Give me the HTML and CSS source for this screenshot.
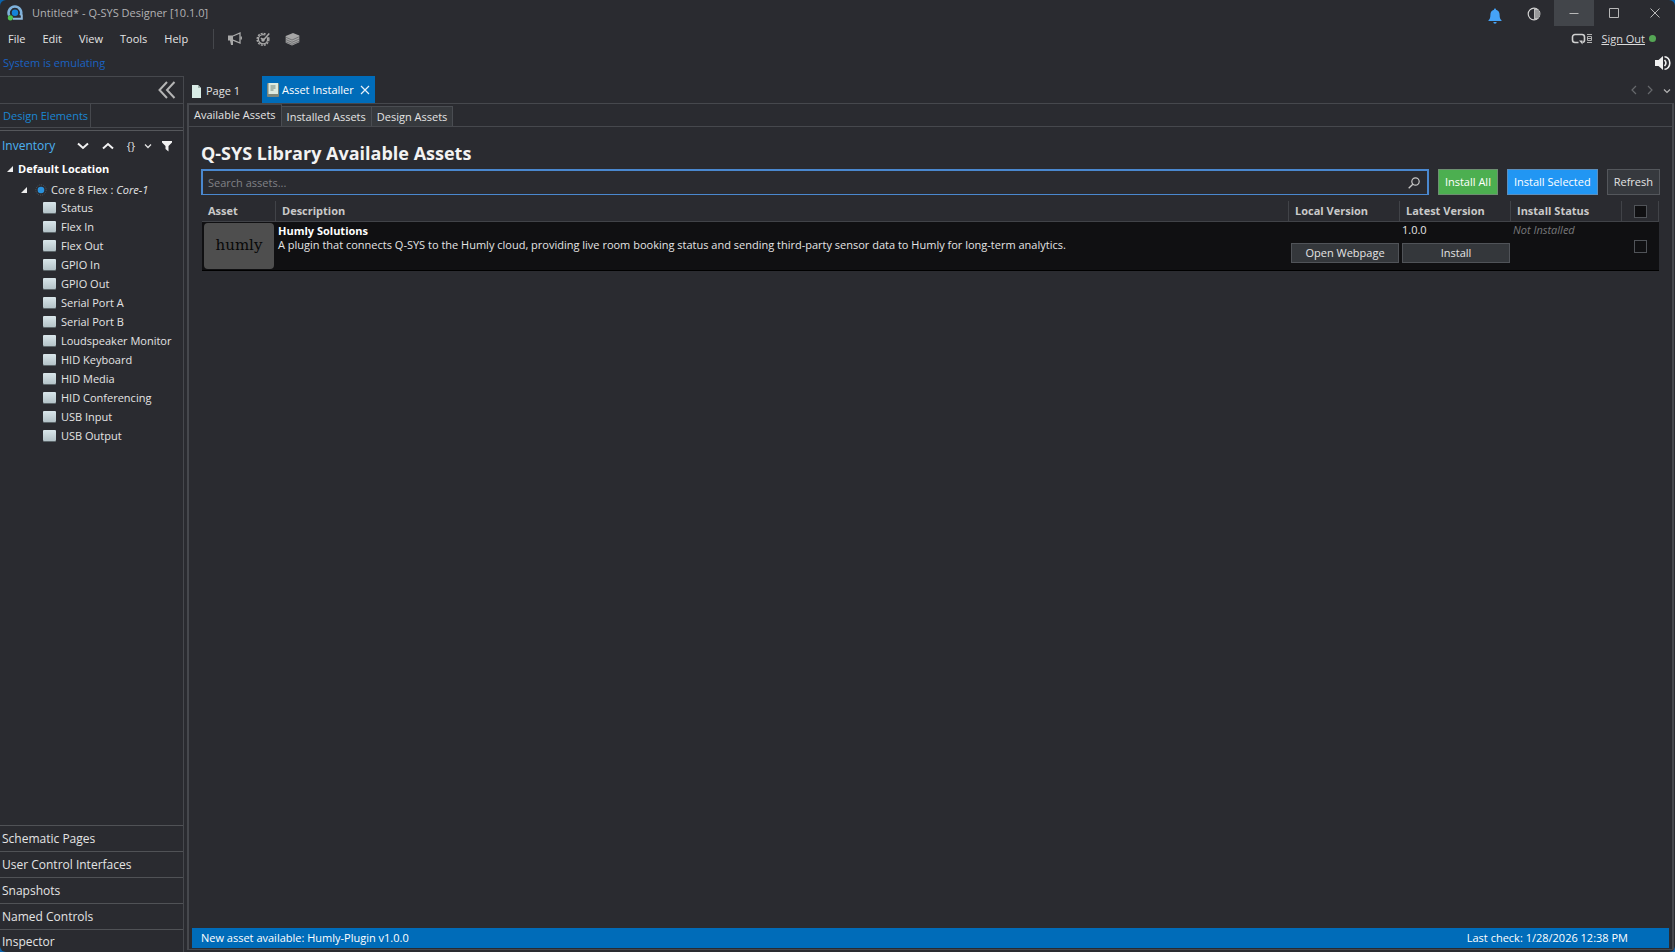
FILE: index.html
```html
<!DOCTYPE html>
<html lang="en">
<head>
<meta charset="utf-8">
<title>Untitled* - Q-SYS Designer [10.1.0]</title>
<link rel="stylesheet" href="styles.css">
</head>
<body>
<div class="app">
  <header class="titlebar">
    <svg class="logo" viewBox="0 0 16 16" width="16" height="16" aria-hidden="true">
      <path d="M2.200 10.500A6.300 6.300 0 1 1 13.600 10.500" fill="none" stroke="#7fb2dc" stroke-width="2.600"/>
      <path d="M6 13.800h8.800V9.500" fill="none" stroke="#8fb9dc" stroke-width="2"/>
      <circle cx="8" cy="7.800" r="3.200" fill="#1583d8"/>
      <circle cx="3.400" cy="12.800" r="2.600" fill="#52c450"/>
    </svg>
    <h1 class="window-title">Untitled* - Q-SYS Designer [10.1.0]</h1>
    <button class="icon-btn bell" aria-label="Notifications">
      <svg viewBox="0 0 14 16" width="14" height="16"><path d="M7 0.500a1 1 0 0 1 1 1.200c2.400.6 3.600 2.500 3.600 5 0 3.500.8 4.500 1.900 5.500v.9H.5v-.9c1.100-1 1.900-2 1.900-5.500 0-2.500 1.200-4.400 3.600-5A1 1 0 0 1 7 .5zM5.300 14h3.400a1.700 1.700 0 0 1-3.400 0z" fill="#45a3f7"/></svg>
    </button>
    <button class="icon-btn theme" aria-label="Theme">
      <svg viewBox="0 0 14 14" width="14" height="14"><circle cx="7" cy="7" r="5.800" fill="none" stroke="#d2d2d2" stroke-width="1.200"/><path d="M7 1a6 6 0 0 1 0 12z" fill="#bdbdbd"/><path d="M8 4h4M8 6h5M8 8h5M8 10h4" stroke="#55565a" stroke-width=".7"/></svg>
    </button>
    <button class="win-btn lit" aria-label="Minimize"><svg viewBox="0 0 12 12" width="12" height="12"><path d="M1.500 6.500h9" stroke="#b8b8b8"/></svg></button>
    <button class="win-btn" aria-label="Maximize"><svg viewBox="0 0 12 12" width="12" height="12"><path d="M1.500 1.500h9v9h-9z" fill="none" stroke="#b8b8b8"/></svg></button>
    <button class="win-btn" aria-label="Close"><svg viewBox="0 0 12 12" width="12" height="12"><path d="M1.500 1.500l9 9m0-9l-9 9" stroke="#b8b8b8"/></svg></button>
  </header>

  <div class="menubar">
    <nav class="menus">
      <button>File</button><button>Edit</button><button>View</button><button>Tools</button><button>Help</button>
    </nav>
    <div class="tools">
      <button class="icon-btn" aria-label="Announcements">
        <svg viewBox="0 0 15 14" width="15" height="14"><path d="M1 3.500h5v5H1zM3 8.500h3v4.500H4z" fill="#a9a9a9"/><path d="M6 4L13 1v10L6 8.200" fill="none" stroke="#a9a9a9" stroke-width="1.300"/><path d="M14.200 4.500v3" stroke="#a9a9a9" stroke-width="1.500"/></svg>
      </button>
      <button class="icon-btn" aria-label="Design check">
        <svg viewBox="0 0 15 14" width="15" height="14"><circle cx="7" cy="7.300" r="5.900" fill="none" stroke="#a9a9a9" stroke-width="1.400" stroke-dasharray="2 1.090"/><circle cx="7" cy="7.300" r="4.600" fill="none" stroke="#a9a9a9" stroke-width="1.300"/><path d="M7 7.500L12.500 2" stroke="#2a2b30" stroke-width="3"/><path d="M4.800 6l2.200 1.500M7 8.500L13.300 1.500" fill="none" stroke="#a9a9a9" stroke-width="1.500"/><circle cx="7" cy="8" r="1.700" fill="#a9a9a9"/></svg>
      </button>
      <button class="icon-btn" aria-label="Assets">
        <svg viewBox="0 0 15 14" width="15" height="14"><path d="M.7 4L8 1l6.300 2.400v6.800L7 13.500.7 10.800z" fill="#a6a6a6"/><path d="M.7 5.200L7 8l7.300-3.300M.7 7.500L7 10.300 14.300 7M.7 9.700L7 12.300l7.300-3.100" fill="none" stroke="#5c5d60" stroke-width=".7"/></svg>
      </button>
    </div>
    <div class="account">
      <svg viewBox="0 0 22 12" width="22" height="12" aria-hidden="true"><path d="M7.500 9.500H4A2.500 2.500 0 0 1 1.500 7V4A2.500 2.500 0 0 1 4 1.500h7A2.500 2.500 0 0 1 13.500 4v3a2.500 2.500 0 0 1-2 2.500" fill="none" stroke="#d0d0d0" stroke-width="1.600"/><path d="M8 7.500h3.500v4z" fill="#d0d0d0"/><path d="M16 1.500h5M16.500 3.500h4v4h-4zM16 9.500h5M17 5.500h3" fill="none" stroke="#b0b0b0"/></svg>
      <a href="#signout">Sign Out</a>
      <span class="online"></span>
    </div>
  </div>

  <div class="modebar">
    <span>System is emulating</span>
    <button class="icon-btn" aria-label="Audio monitor">
      <svg viewBox="0 0 16 16" width="16" height="16"><path d="M0 5h3.500L8 1v14l-4.500-4H0z" fill="#f0f0f0"/><path d="M9.500 5q2.800 3 0 6M9.500 1.700a5.300 6.300 0 0 1 0 12.600" fill="none" stroke="#f0f0f0" stroke-width="1.600"/></svg>
    </button>
  </div>

  <div class="workspace">
    <aside class="sidebar">
      <div class="collapse">
        <button class="icon-btn" aria-label="Collapse"><svg viewBox="0 0 18 18" width="18" height="18"><path d="M9 1L1.500 9 9 17M16.500 1L9 9l7.500 8" fill="none" stroke="#b4b4b4" stroke-width="2"/></svg></button>
      </div>
      <div class="side-tabs"><button>Design Elements</button></div>
      <section class="inventory">
        <div class="inv-head">
          <h2>Inventory</h2>
          <button class="icon-btn" aria-label="Expand all"><svg viewBox="0 0 12 12" width="12" height="12"><path d="M1 3.500L6 8l5-4.500" fill="none" stroke="#f2f2f2" stroke-width="2"/></svg></button>
          <button class="icon-btn" aria-label="Collapse all"><svg viewBox="0 0 12 12" width="12" height="12"><path d="M1 8.500L6 4l5 4.500" fill="none" stroke="#f2f2f2" stroke-width="2"/></svg></button>
          <button class="icon-btn braces">{}</button>
          <button class="icon-btn" aria-label="More"><svg viewBox="0 0 12 12" width="12" height="12"><path d="M3 4.500l3 3 3-3" fill="none" stroke="#e2e2e2" stroke-width="1.300"/></svg></button>
          <button class="icon-btn" aria-label="Filter"><svg viewBox="0 0 10 12" width="10" height="12"><path d="M0 1h10v1.500L6.500 6v5.500L3.500 9V6L0 2.500z" fill="#f2f2f2"/></svg></button>
        </div>
        <div class="tree">
          <div class="node root"><svg viewBox="0 0 6 6" width="6" height="6"><path d="M6 0v6H0z" fill="#eee"/></svg>Default Location</div>
          <div class="node core"><svg viewBox="0 0 6 6" width="6" height="6"><path d="M6 0v6H0z" fill="#eee"/></svg><svg viewBox="0 0 12 12" width="12" height="12"><circle cx="6" cy="6" r="5.200" fill="none" stroke="#50565c" stroke-dasharray="1 1"/><circle cx="6" cy="6" r="3.300" fill="#2b92dc"/></svg><span>Core 8 Flex : <em>Core-1</em></span></div>
          <ul>
            <li>Status</li><li>Flex In</li><li>Flex Out</li><li>GPIO In</li><li>GPIO Out</li><li>Serial Port A</li><li>Serial Port B</li><li>Loudspeaker Monitor</li><li>HID Keyboard</li><li>HID Media</li><li>HID Conferencing</li><li>USB Input</li><li>USB Output</li>
          </ul>
        </div>
      </section>
      <nav class="drawers">
        <button>Schematic Pages</button><button>User Control Interfaces</button><button>Snapshots</button><button>Named Controls</button><button>Inspector</button>
      </nav>
    </aside>

    <main class="main">
      <div class="doc-tabs">
        <button class="doc-tab page">
          <svg viewBox="0 0 9 13" width="9" height="13"><path d="M0 0h6l3 3v10H0z" fill="#d9ece6"/><path d="M6 0v3h3z" fill="#9fb3ad"/></svg>Page 1
        </button>
        <button class="doc-tab active">
          <svg viewBox="0 0 12 14" width="12" height="14"><rect x="0" y="0" width="12" height="14" rx="1" fill="#7d877b"/><rect x="1.500" y="0" width="9.500" height="11" fill="#dceadf"/><path d="M3.500 3h5M3.500 5h5M3.500 7h3" stroke="#6f8278"/></svg>Asset Installer
          <svg viewBox="0 0 10 10" width="10" height="10"><path d="M1 1l8 8m0-8L1 9" stroke="#e6f1fa" stroke-width="1.200"/></svg>
        </button>
        <div class="tab-nav">
          <button class="icon-btn" aria-label="Previous tab"><svg viewBox="0 0 6 10" width="6" height="10"><path d="M5 1L1 5l4 4" fill="none" stroke="#66686c" stroke-width="1.200"/></svg></button>
          <button class="icon-btn" aria-label="Next tab"><svg viewBox="0 0 6 10" width="6" height="10"><path d="M1 1l4 4-4 4" fill="none" stroke="#66686c" stroke-width="1.200"/></svg></button>
          <button class="icon-btn" aria-label="Tab list"><svg viewBox="0 0 8 10" width="8" height="10"><path d="M1 4.500l3 3 3-3" fill="none" stroke="#b4b4b4" stroke-width="1.200"/></svg></button>
        </div>
      </div>
      <div class="panel">
        <div class="asset-tabs">
          <button class="selected">Available Assets</button><button>Installed Assets</button><button>Design Assets</button>
        </div>
        <div class="content">
          <h2 class="heading">Q-SYS Library Available Assets</h2>
          <div class="actions">
            <div class="search">
              <input type="text" aria-label="Search assets" placeholder="Search assets...">
              <svg viewBox="0 0 12 12" width="12" height="12" aria-hidden="true"><circle cx="7.500" cy="4.500" r="3.700" fill="none" stroke="#c6c6c6" stroke-width="1.200"/><path d="M4.800 7.200L.7 11.300" stroke="#c6c6c6" stroke-width="1.300"/></svg>
            </div>
            <button class="btn green">Install All</button>
            <button class="btn blue">Install Selected</button>
            <button class="btn">Refresh</button>
          </div>
          <div class="table-wrap">
          <table class="assets">
            <colgroup><col class="c-asset"><col><col class="c-ver"><col class="c-ver"><col class="c-ver"><col class="c-check"></colgroup>
            <thead><tr><th>Asset</th><th>Description</th><th>Local Version</th><th>Latest Version</th><th>Install Status</th><th class="check"><input type="checkbox" aria-label="Select all"></th></tr></thead>
            <tbody><tr>
              <td><div class="thumb">humly</div></td>
              <td class="desc"><strong>Humly Solutions</strong><p>A plugin that connects Q-SYS to the Humly cloud, providing live room booking status and sending third-party sensor data to Humly for long-term analytics.</p></td>
              <td class="ver"><span></span><button>Open Webpage</button></td>
              <td class="ver"><span>1.0.0</span><button>Install</button></td>
              <td class="ver"><em>Not Installed</em></td>
              <td class="check"><input type="checkbox" aria-label="Select Humly Solutions"></td>
            </tr></tbody>
          </table>
          </div>
        </div>
        <footer class="status"><span>New asset available: Humly-Plugin v1.0.0</span><span>Last check: 1/28/2026 12:38 PM</span></footer>
      </div>
    </main>
  </div>
</div>
</body>
</html>
```
FILE: styles.css
```css
* { box-sizing: border-box; }
body { margin: 0; background: #0b63ad; font: 11px/14px "Open Sans", "Noto Sans", sans-serif; color: #e4e4e4; }
button { font: inherit; color: inherit; background: none; border: 0; padding: 0; white-space: nowrap; }
svg { display: block; flex: none; }
h1, h2, p, ul { margin: 0; padding: 0; }
.app { display: flex; flex-direction: column; height: 100vh; background: #2a2b30; border-radius: 6px; overflow: hidden; }
.icon-btn { display: flex; align-items: center; justify-content: center; }

.titlebar { display: flex; align-items: center; height: 26px; padding-left: 7px; }
.window-title { flex: 1; margin-left: 9px; font-size: 11px; font-weight: 400; color: #b2b2b4; }
.bell { width: 39px; padding-top: 6px; }
.theme { width: 40px; padding-top: 2px; }
.win-btn { display: flex; align-items: center; justify-content: center; width: 40px; height: 26px; }
.win-btn:last-child { width: 41px; }
.lit { background: #42454a; }

.menubar { display: flex; align-items: center; height: 25px; padding: 0 19px 0 8px; }
.menus { display: flex; gap: 17px; }
.tools { display: flex; align-items: center; gap: 14px; height: 20px; margin-left: 25px; padding-left: 13px; border-left: 1px solid #45474c; }
.account { display: flex; align-items: center; gap: 8px; margin-left: auto; }
.account a { color: #dcdcdc; }
.online { width: 7px; height: 7px; margin-left: -4px; border-radius: 50%; background: #55a655; }

.modebar { display: flex; align-items: center; justify-content: space-between; height: 25px; padding: 0 4px 2px 3px; color: #1a62c0; }

.workspace { display: flex; flex: 1; min-height: 0; }
.sidebar { display: flex; flex-direction: column; width: 184px; border: solid #46484d; border-width: 1px 1px 0 0; }
.collapse { display: flex; align-items: center; justify-content: flex-end; height: 27px; padding-right: 7px; border-bottom: 1px solid #46484d; }
.side-tabs { height: 24px; border-bottom: 1px solid #46484d; }
.side-tabs button { height: 23px; padding: 0 2px 0 3px; border-right: 1px solid #46484d; color: #1a86d2; }
.inventory { flex: 1; margin-top: 2px; border-top: 1px solid #55575b; min-height: 0; overflow: hidden; }
.inv-head { display: flex; align-items: center; height: 29px; padding: 0 11px 0 2px; }
.inv-head h2 { flex: 1; font-size: 12px; font-weight: 400; color: #4cb2f0; }
.inv-head .icon-btn { margin-left: 13px; }
.inv-head .braces + .icon-btn { margin-left: 7px; }
.inv-head .icon-btn:last-child { margin-left: 8px; }
.node { display: flex; align-items: center; }
.root { height: 18px; gap: 5px; padding-left: 7px; font-weight: 700; color: #fff; }
.core { height: 20px; gap: 8px; padding: 3px 0 0 21px; }
.core svg + span { margin-left: -4px; }
.tree ul { list-style: none; }
.tree li { display: flex; align-items: center; gap: 5px; height: 19px; padding-left: 43px; }
.tree li::before { content: ""; width: 13px; height: 11px; border-radius: 1px; background: linear-gradient(#d9e6ea, #b4c3c8); box-shadow: 0 1px 0 #5c666a; }
.drawers { display: flex; flex-direction: column; }
.drawers button { height: 26px; padding-left: 2px; border-top: 1px solid #505256; text-align: left; font-size: 12px; }
.drawers button:last-child { height: 23px; padding-top: 2px; }

.main { display: flex; flex-direction: column; flex: 1; min-width: 0; padding: 0 1px 2px 3px; }
.doc-tabs { display: flex; height: 27px; }
.doc-tab { display: flex; align-items: center; gap: 5px; padding: 0 7px 0 5px; }
.doc-tab.page { width: 75px; padding-top: 3px; }
.doc-tab.active { padding: 0 5px; background: #006cb9; color: #fff; gap: 3px; }
.doc-tab svg + svg { margin-left: 3px; }
.tab-nav { display: flex; align-items: center; gap: 10px; margin-left: auto; padding-right: 3px; }
.panel { display: flex; flex-direction: column; flex: 1; min-height: 0; border: solid #46484d; border-width: 1px 2px 1px 2px; }
.asset-tabs { display: flex; align-items: flex-end; height: 23px; border-bottom: 1px solid #46484d; }
.asset-tabs button { height: 20px; padding: 0 5px; background: #36393d; border: solid #4a4d52; border-width: 1px 1px 0 0; }
.asset-tabs .selected { height: 22px; padding: 0 5px 1px 5px; background: none; border-top-color: #46484d; }
.content { flex: 1; padding: 14px 12px 0 12px; }
.heading { font-size: 18px; line-height: 24px; color: #f2f2f2; }
.actions { display: flex; gap: 9px; height: 26px; margin-top: 4px; }
.search { display: flex; align-items: center; flex: 1; padding-right: 7px; border: 2px solid #4a88cf; border-bottom-width: 1px; }
.search input { flex: 1; min-width: 0; height: 20px; padding: 0 5px; border: 0; outline: 0; background: none; color: #eee; font: inherit; }
.search input::placeholder { color: #808186; opacity: 1; }
.btn { padding: 0 6px; background: #36393e; border: 1px solid #54575c; }
.green { background: #4caf50; border-color: #6d8f71; color: #fff; }
.blue { background: #2196f3; border-color: #5c8fbd; color: #fff; }

.table-wrap { margin-top: 6px; padding: 0 1px; }
.assets { width: 100%; border-collapse: separate; border-spacing: 0; table-layout: fixed; }
.c-asset { width: 74px; }
.c-ver { width: 111px; }
.c-check { width: 37px; }
.assets th { height: 21px; padding: 0 0 0 6px; border: solid #414348; border-width: 0 1px 1px 0; text-align: left; color: #c9c9c9; }
.assets tbody { background: #101012; }
.assets td { height: 48px; padding: 1px; vertical-align: top; border-bottom: 1px solid #000; }
.thumb { height: 46px; margin: 0 1px; border-radius: 4px; background: #4e4e4e; color: #080808; font: 15px/44px "DejaVu Serif", serif; text-align: center; }
.assets .desc { padding: 1px 2px; }
.desc strong { display: block; line-height: 15px; color: #fff; }
.ver span, .ver em { display: block; height: 20px; padding: 0 1px; }
.ver em { color: #77787a; }
.ver button { display: block; width: 108px; height: 20px; margin-left: 1px; background: #34373b; border: 1px solid #505358; }
.assets .check { padding: 0; text-align: center; vertical-align: middle; }
.check input { appearance: none; display: block; width: 13px; height: 13px; margin: 0 auto; background: #101012; border: 1px solid #505358; }
.status { display: flex; align-items: center; justify-content: space-between; height: 20px; margin: 0 3px 1px; padding: 0 41px 0 9px; background: #006cb9; color: #fff; }
```
